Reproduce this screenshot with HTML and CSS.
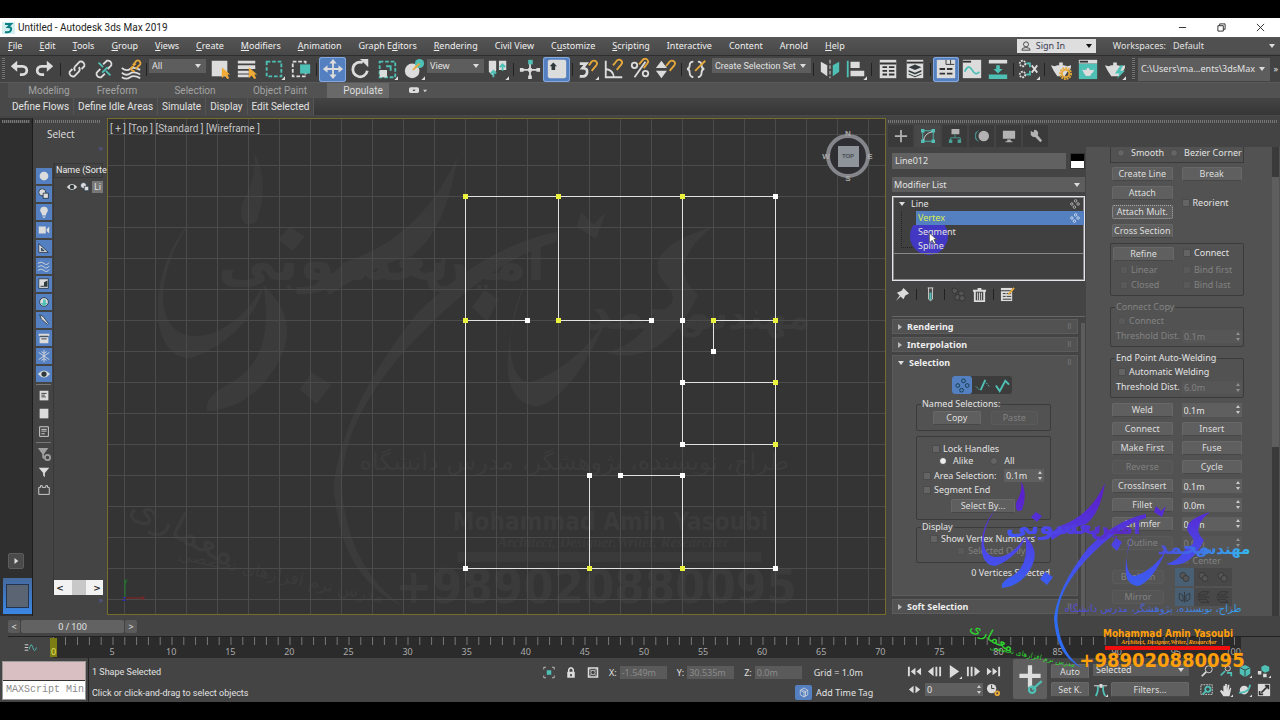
FILE: index.html
```html
<!DOCTYPE html>
<html lang="en">
<head>
<meta charset="utf-8">
<title>Untitled - Autodesk 3ds Max 2019</title>
<link rel="stylesheet" href="styles.css">
</head>
<body>
<svg class="defs" aria-hidden="true">
  <defs>
    <linearGradient id="ink" x1="0" x2="280" y1="0" y2="0" gradientUnits="userSpaceOnUse">
      <stop offset="0" stop-color="#2e63ff"/><stop offset=".25" stop-color="#4a4bee"/><stop offset=".55" stop-color="#5a28c8"/><stop offset=".8" stop-color="#3f6be6"/><stop offset="1" stop-color="#35b8f0"/>
    </linearGradient>
    <linearGradient id="inkline" x1="90" x2="280" y1="0" y2="0" gradientUnits="userSpaceOnUse">
      <stop offset="0" stop-color="#5648c8"/><stop offset=".4" stop-color="#4a5cd8"/><stop offset="1" stop-color="#35a8f0"/>
    </linearGradient>
    <linearGradient id="sweep" x1="0" y1="20" x2="0" y2="130" gradientUnits="userSpaceOnUse">
      <stop offset="0" stop-color="#5a22cc"/><stop offset=".5" stop-color="#4a48e8"/><stop offset="1" stop-color="#2f6cf4"/>
    </linearGradient>
    <symbol id="brand" viewBox="0 0 285 195">
      <g class="b-sweep">
        <path d="M27 32C14 50 10 76 27 79C40 80 52 68 57 58C55 72 38 85 27 88C8 88 10 50 27 32ZM53 3Q60 16 54 32Q47 36 48 25Q55 13 53 3ZM57 58Q72 72 64 88Q54 108 34 110Q32 104 44 98Q62 88 57 58ZM137 5Q132 36 118 46Q102 50 84 62Q80 56 92 48Q122 38 137 5ZM178 40Q150 48 118 82Q85 118 90 148Q94 176 114 190Q88 178 86 140Q90 108 120 70Q148 42 178 36ZM165 56C155 78 158 98 167 98C180 94 190 84 198 73Q184 104 170 108Q148 106 165 56ZM242 34Q210 44 223 58Q230 66 218 70Q212 82 198 86Q222 92 236 62Q222 50 242 34ZM68 34l6 4-5 6-6-5ZM148 60l6 4-5 9-6-6ZM77 94l8 5-6 8-7-6ZM188 28l5 5 5-5-4 11-8-5Z"/>
      </g>
      <g class="b-name" direction="rtl" text-anchor="middle">
        <text x="216" y="76" font-size="20">محمد</text>
        <text x="148" y="56" font-size="22">امین</text>
        <text x="86" y="56" font-size="24">یعسوبی</text>
        <text x="255" y="76" font-size="15">مهندس</text>
      </g>
      <text class="b-line" direction="rtl" text-anchor="middle" x="185" y="134" font-size="10">طراح، نویسنده، پژوهشگر، مدرس دانشگاه</text>
      <g class="b-green" direction="rtl" text-anchor="middle">
        <text x="22" y="163" font-size="15" transform="rotate(28 22 163)">معماری</text>
        <text x="64" y="180" font-size="7" transform="rotate(12 64 180)">مدرس نرم افزارهای تخصصی</text>
      </g>
      <g class="b-orange" text-anchor="middle">
        <text x="200" y="159" font-size="10">Mohammad Amin Yasoubi</text>
        <text class="b-sub" x="201" y="166">Architect, Designer,Writer, Researcher</text>
        <text x="194" y="189" font-size="20">+989020880095</text>
      </g>
      <path class="b-red" d="M137 168H262V172H137Z"/>
    </symbol>
    <symbol id="undo" viewBox="0 0 24 24"><path class="st3" d="M7 9h9a4.500 4.500 0 0 1 0 9h-3"/><path class="w" d="M3 9l7-6v12z"/></symbol>
    <symbol id="redo" viewBox="0 0 24 24"><path class="st3" d="M17 9H8a4.500 4.500 0 0 0 0 9h3"/><path class="w" d="M21 9l-7-6v12z"/></symbol>
    <symbol id="link" viewBox="0 0 24 24"><path class="st2" d="M10 14a4 4 0 0 1 0-5l5-5a4 4 0 0 1 5 5l-3 3M14 10a4 4 0 0 1 0 5l-5 5a4 4 0 0 1-5-5l3-3"/></symbol>
    <symbol id="unlink" viewBox="0 0 24 24"><path class="st2" d="M11 7l4-4a4 4 0 0 1 5 5l-4 4M13 17l-4 4a4 4 0 0 1-5-5l4-4"/><path class="tl" d="M6 5l5 5M14 14l5 5M16 10l-6 6"/></symbol>
    <symbol id="bind" viewBox="0 0 24 24"><path class="st2" d="M2 11q5 4 9 1t11 1M2 16q5 4 9 1t11 1M2 21q5 3 9 0t11 1"/><path class="ol" d="M14 8l4-5a3 3 0 0 1 4 4l-5 5M17 6l-5 5a3 3 0 0 0 4 3"/></symbol>
    <symbol id="pick" viewBox="0 0 24 24"><path class="w" d="M3 3h17v17H3z"/><path class="o" d="M14 10v12l3-3 3 4 2-1-2-4h3z"/></symbol>
    <symbol id="pickname" viewBox="0 0 24 24"><path class="w" d="M2 3h19v3H2zM2 8h19v4H2zM2 14h12v3H2zM2 18h12v3H2z"/><path class="o" d="M14 10v12l3-3 3 4 2-1-2-4h3z"/></symbol>
    <symbol id="rect" viewBox="0 0 24 24"><path class="tl dash" d="M4 4h16v16H4z"/><path class="w" d="M24 20v4h-4z"/></symbol>
    <symbol id="window" viewBox="0 0 24 24"><path class="st2 dash" d="M3 4h14v16H3z"/><path class="t" d="M11 7h11v10H11z"/></symbol>
    <symbol id="move" viewBox="0 0 24 24"><path class="st2" d="M12 4v16M4 12h16"/><path class="w" d="M12 1l4 5H8zM12 23l4-5H8zM1 12l5-4v8zM23 12l-5-4v8z"/></symbol>
    <symbol id="rotate" viewBox="0 0 24 24"><path class="st3" d="M15 5A8 8 0 1 0 20 14"/><path class="w" d="M12 1h9v9z"/></symbol>
    <symbol id="scale" viewBox="0 0 24 24"><path class="tl dash" d="M4 4h17v17H4z"/><path class="w" d="M4 13h8v8H4zM24 20v4h-4z"/><path class="tl" d="M11 9h5v5"/></symbol>
    <symbol id="place" viewBox="0 0 24 24"><circle class="w" cx="10" cy="14" r="8"/><circle class="t" cx="18" cy="6" r="5"/><path class="ol" d="M11 13l7-7"/><path class="w" d="M24 20v4h-4z"/></symbol>
    <symbol id="pivot" viewBox="0 0 24 24"><path class="w" d="M2 3h8v11l-4 5-4-4zM13 3h8v10h-8zM24 20v4h-4z"/><path class="tl" d="M7 21v-7M4 17l3-3 3 3M17 14V7M14 10l3-3 3 3"/></symbol>
    <symbol id="manip" viewBox="0 0 24 24"><path class="st2" d="M3 13h18M12 6v15"/><path class="w" d="M1 11h4v4H1zM19 11h4v4h-4zM10 19h4v4h-4zM10 11h4v4h-4z"/><path class="t" d="M10 2h5v5h-5z"/></symbol>
    <symbol id="kbd" viewBox="0 0 24 24"><rect class="w" x="2" y="2" width="20" height="20" rx="2"/><path class="k" d="M8 5l4 4h-2v4H6V9H4z"/></symbol>
    <symbol id="snap" viewBox="0 0 24 24"><path class="st3" d="M3 6h7l-4 5q6 0 5 5t-8 4"/><path class="ol" d="M13 8l3-4a3 3 0 0 1 5 4l-5 6"/><path class="w" d="M24 20v4h-4z"/></symbol>
    <symbol id="angle" viewBox="0 0 24 24"><path class="st2" d="M3 3v18h18M3 12q8 1 9 9"/><path class="ol" d="M11 8l4-5a3 3 0 0 1 5 4l-5 6"/></symbol>
    <symbol id="percent" viewBox="0 0 24 24"><circle class="st2" cx="6" cy="8" r="3"/><circle class="st2" cx="18" cy="17" r="3"/><path class="st2" d="M18 4L6 21"/><path class="ol" d="M11 7l4-5a3 3 0 0 1 5 4l-4 5"/></symbol>
    <symbol id="spin" viewBox="0 0 24 24"><path class="w" d="M1 11l6-8 6 8zM1 14h12l-6 8z"/><path class="ol" d="M12 9l4-5a3 3 0 0 1 5 4l-5 6"/></symbol>
    <symbol id="braces" viewBox="0 0 24 24"><path class="st2" d="M8 4q-4 0-4 4t-3 4q3 0 3 4t4 5M13 4q4 0 4 4t3 4q-3 0-3 4t-4 5"/><path class="ol" d="M10 14L21 3"/></symbol>
    <symbol id="mirror" viewBox="0 0 24 24"><path class="w" d="M2 4l7 4v12l-7-5z"/><path class="t" d="M22 4l-7 4v12l7-5z"/><path class="st1 dash" d="M12 2v20"/></symbol>
    <symbol id="align" viewBox="0 0 24 24"><path class="tl" d="M3 3v18"/><path class="w" d="M6 4h10v7H6zM6 14h15v6H6zM24 20v4h-4z"/></symbol>
    <symbol id="table" viewBox="0 0 24 24"><path class="w" d="M3 2h18v20H3z"/><path class="kl" d="M3 6h18M6 10h5M13 10h6M6 14h5M13 14h6M6 18h5M13 18h6"/></symbol>
    <symbol id="layers" viewBox="0 0 24 24"><path class="w" d="M3 2h18v20H3z"/><path class="kl" d="M3 5h18"/><path class="k" d="M5 10l7-3 7 3-7 3zM5 13l7 3 7-3v2l-7 3-7-3zM5 17l7 3 7-3v1l-7 3-7-3z"/></symbol>
    <symbol id="ribbon" viewBox="0 0 24 24"><path class="w" d="M2 2h20v20H2z"/><path class="kl1" d="M12 2v5h9M17 2v5"/><path class="kl" d="M5 12h6M13 12h6M5 17h6M13 17h6"/></symbol>
    <symbol id="curve" viewBox="0 0 24 24"><path class="w" d="M2 2h20v20H2z"/><path class="kl" d="M2 4h9"/><path class="tl" d="M4 15q4-9 8-2t8 2"/></symbol>
    <symbol id="dope" viewBox="0 0 24 24"><path class="w" d="M2 2h20v4H2z"/><path class="t" d="M2 18h20v5H2zM10 8h4v4h3l-5 5-5-5h3z"/></symbol>
    <symbol id="mat" viewBox="0 0 24 24"><circle class="st2 dash2" cx="5" cy="6" r="3"/><circle class="st2 dash2" cx="5" cy="18" r="3"/><path class="tl" d="M9 6h4v4M9 18h4v-4"/><path class="st2" d="M15 8l6 8M21 8l-6 8"/><path class="w" d="M24 20v4h-4z"/></symbol>
    <symbol id="pot" viewBox="0 0 24 24"><path class="w" d="M1 8l4 1q6-3 14 0l4-1q0 6-4 7l-3 5H8l-4-6zM10 5h4v3h-4z"/></symbol>
    <symbol id="gear" viewBox="0 0 24 24"><circle class="ol" cx="17" cy="17" r="4"/><circle class="ol dash2" cx="17" cy="17" r="6"/></symbol>
    <symbol id="renderset" viewBox="0 0 24 24"><use href="#pot"/><use href="#gear"/></symbol>
    <symbol id="frame" viewBox="0 0 24 24"><path class="t" d="M2 6h20v17H2z"/><path class="w" d="M2 2h20v4H2z"/><path class="kl" d="M3 4h9"/><svg x="4" y="8" width="16" height="14"><use href="#pot"/></svg></symbol>
    <symbol id="render" viewBox="0 0 24 24"><use href="#pot"/><path class="t" d="M18 8l-6 9h5l-3 6 9-9h-5l3-6z"/><path class="w" d="M24 20v4h-4z"/></symbol>
    <symbol id="sphere" viewBox="0 0 16 16"><circle class="w" cx="8" cy="8" r="5"/></symbol>
    <symbol id="shapes" viewBox="0 0 16 16"><circle class="kw" cx="6" cy="6" r="4"/><path class="kw" d="M7 7h6v6H7z"/></symbol>
    <symbol id="bulb" viewBox="0 0 16 16"><path class="w" d="M8 2a4 4 0 0 0-3 7l1 3h4l1-3a4 4 0 0 0-3-7zM6 13h4l-2 2z"/></symbol>
    <symbol id="cam" viewBox="0 0 16 16"><path class="w" d="M2 4h8v8H2zM11 7l3-3v8l-3-3z"/></symbol>
    <symbol id="tri" viewBox="0 0 16 16"><path class="kw" d="M2 3l11 10H2zM5 8v3h3z"/></symbol>
    <symbol id="waves" viewBox="0 0 16 16"><path class="st1" d="M1 5q4-3 7 0t6-1M1 9q4-3 7 0t6-1M1 13q4-3 7 0t6-1"/></symbol>
    <symbol id="group" viewBox="0 0 16 16"><path class="kw" d="M2 2h11v11H2z"/><path class="k" d="M4 10h4V6l4-2v7H4z"/></symbol>
    <symbol id="xref" viewBox="0 0 16 16"><circle class="kw" cx="8" cy="8" r="5"/><path class="t" d="M7 5h3v4h2l-4 4-4-4h3z"/></symbol>
    <symbol id="bone" viewBox="0 0 16 16"><path class="kw" d="M3 2l4 2 6 8-1 1-7-6z"/></symbol>
    <symbol id="box" viewBox="0 0 16 16"><path class="w" d="M2 3h12v3H2zM3 7h10v7H3z"/><path class="kl1" d="M3 6h10M5 9h6"/></symbol>
    <symbol id="snow" viewBox="0 0 16 16"><path class="st1" d="M8 1v14M2 4l12 8M14 4L2 12M5 3l3 2 3-2M5 13l3-2 3 2"/></symbol>
    <symbol id="eye" viewBox="0 0 16 16"><path class="w" d="M1 8q7-8 14 0-7 8-14 0z"/><circle class="k" cx="8" cy="8" r="3"/></symbol>
    <symbol id="doc" viewBox="0 0 16 16"><path class="w" d="M3 2h10v11H3z"/><path class="kl1" d="M5 5h6M5 7h4M5 9h5"/></symbol>
    <symbol id="blank" viewBox="0 0 16 16"><path class="w" d="M3 2h10v11H3z"/></symbol>
    <symbol id="docl" viewBox="0 0 16 16"><path class="st1" d="M3 2h10v11H3zM5 5h6M5 7h6M5 10h4"/></symbol>
    <symbol id="filter" viewBox="0 0 16 16"><path class="w" d="M2 3h12L9 9v5l-2-2V9z"/></symbol>
    <symbol id="filterset" viewBox="0 0 16 16"><path class="w" d="M1 1h12L8 8v6l-2-2V8z"/><circle class="st2" cx="12" cy="12" r="3"/></symbol>
    <symbol id="bag" viewBox="0 0 16 16"><path class="st1" d="M2 5h2V3h2v2h4V3h2v2h2v8H2z"/></symbol>
    <symbol id="plus" viewBox="0 0 16 16"><path class="st2" d="M8 1v14M1 8h14"/></symbol>
    <symbol id="modify" viewBox="0 0 16 16"><path class="tl1" d="M2 2h12v12H2z"/><path class="t" d="M0 0h4v4H0zM12 0h4v4h-4zM0 12h4v4H0zM12 12h4v4h-4z"/><path class="st1" d="M3 13Q4 5 13 3"/></symbol>
    <symbol id="hier" viewBox="0 0 16 16"><path class="w" d="M4 0h9v6H4z"/><path class="tl1" d="M8 6v4M3 13v-3h11v3"/><path class="t" d="M1 12h4v4H1zM11 12h4v4h-4z"/></symbol>
    <symbol id="motion" viewBox="0 0 16 16"><circle class="w" cx="10" cy="8" r="6"/><path class="tl1" d="M4 2a7 7 0 0 0 0 12M2 3a7 7 0 0 0 0 10"/></symbol>
    <symbol id="display" viewBox="0 0 16 16"><path class="w" d="M1 2h14v9H1zM6 12h4v2h2v1H4v-1h2z"/></symbol>
    <symbol id="wrench" viewBox="0 0 16 16"><path class="w" d="M2 2l3 2 1-3a4 4 0 0 1 4 6l5 6-2 2-6-6a4 4 0 0 1-5-5z"/></symbol>
    <symbol id="dots" viewBox="0 0 16 16"><g class="ring"><circle cx="9" cy="3" r="2"/><circle cx="3" cy="8" r="2"/><circle cx="13" cy="8" r="2"/><circle cx="7" cy="13" r="2"/></g></symbol>
    <symbol id="seg" viewBox="0 0 16 16"><path class="tl" d="M6 13l5-11"/><path class="tl1 dash2" d="M1 9l4 4M12 5l3 4"/></symbol>
    <symbol id="spline" viewBox="0 0 16 16"><path class="tl" d="M1 8l4 6 6-11 4 4"/></symbol>
    <symbol id="pin" viewBox="0 0 16 16"><path class="w" d="M9 1l6 6-2 1-2 1-2 4-3-3-5 5 4-6-3-3 5-2z"/></symbol>
    <symbol id="tube" viewBox="0 0 16 16"><path class="st1" d="M5 1h6M6 1v12q2 3 4 0V1"/><path class="t" d="M7 6h2v8H7z"/></symbol>
    <symbol id="unique" viewBox="0 0 16 16"><circle class="d" cx="4" cy="4" r="3"/><circle class="d" cx="11" cy="7" r="3"/><circle class="d" cx="7" cy="11" r="3"/><circle class="d" cx="12" cy="12" r="3"/></symbol>
    <symbol id="trash" viewBox="0 0 16 16"><path class="st2" d="M1 4h14M3 5v10h10V5M6 2h4"/><path class="st1" d="M6 6v8M8 6v8M10 6v8"/></symbol>
    <symbol id="config" viewBox="0 0 16 16"><path class="w" d="M1 1h12v14H1z"/><path class="kl1" d="M1 4h12M3 7h3M7 7h5M3 10h3M7 10h5M3 13h9"/><path class="ol" d="M9 8l6-7"/></symbol>
    <symbol id="first" viewBox="0 0 16 16"><path class="w" d="M1 3h2v10H1zM9 4v8L4 8zM15 4v8l-5-4z"/></symbol>
    <symbol id="prev" viewBox="0 0 16 16"><path class="w" d="M7 3v10L1 8zM9 3h2v10H9zM13 3h2v10h-2z"/></symbol>
    <symbol id="play" viewBox="0 0 16 16"><path class="w" d="M3 1l10 7-10 7zM16 13v3h-3z"/></symbol>
    <symbol id="next" viewBox="0 0 16 16"><path class="w" d="M9 3v10l6-5zM1 3h2v10H1zM5 3h2v10H5z"/></symbol>
    <symbol id="last" viewBox="0 0 16 16"><path class="w" d="M15 3h-2v10h2zM7 4v8l5-4zM1 4v8l5-4z"/></symbol>
    <symbol id="key" viewBox="0 0 16 16"><path class="w" d="M7 4v8L2 8zM9 4v8l5-4z"/></symbol>
    <symbol id="clock" viewBox="0 0 16 16"><circle class="w" cx="6" cy="7" r="5"/><path class="kl1" d="M6 3v4h3"/><circle class="ol" cx="12" cy="12" r="2"/></symbol>
    <symbol id="tangent" viewBox="0 0 16 16"><path class="tl" d="M3 15Q6 10 5 4M13 15Q10 10 11 4"/><path class="st1" d="M1 4h14"/><path class="w" d="M7 2h3v4H7zM16 13v3h-3z"/></symbol>
    <symbol id="mag" viewBox="0 0 16 16"><circle class="st1" cx="10" cy="6" r="4"/><path class="st2" d="M7 9l-5 5"/></symbol>
    <symbol id="magall" viewBox="0 0 16 16"><circle class="st1" cx="10" cy="5" r="3"/><path class="tl" d="M7 8l-5 5M9 10h5v4"/></symbol>
    <symbol id="cube" viewBox="0 0 16 16"><path class="t" d="M2 4l6-3 6 3v7l-6 4-6-4z"/><path class="kl1" d="M2 4l6 3 6-3M8 7v8"/><path class="w" d="M16 13v3h-3z"/></symbol>
    <symbol id="cubes" viewBox="0 0 16 16"><path class="t" d="M9 1l5 2v5l-5 2-4-3V3z"/><path class="w" d="M1 8h4v4H1zM7 11h4v4H7zM16 13v3h-3z"/></symbol>
    <symbol id="region" viewBox="0 0 16 16"><path class="st1 dash2" d="M1 2h13v11H1z"/><circle class="tl" cx="9" cy="7" r="3"/><path class="tl" d="M7 9l-4 4"/></symbol>
    <symbol id="hand" viewBox="0 0 16 16"><path class="w" d="M5 15L1 9l2-1 2 2V3h2v5V1h2v7l1-6h2l-1 7 2-4 1 1-2 9zM16 13v3h-3z"/></symbol>
    <symbol id="orbit" viewBox="0 0 16 16"><circle class="w" cx="7" cy="8" r="5"/><path class="tl" d="M1 11Q12 12 14 2"/><path class="w" d="M16 13v3h-3z"/></symbol>
    <symbol id="maxi" viewBox="0 0 16 16"><path class="w" d="M1 1h14v14H1z"/><path class="kl" d="M9 3h4v4M12 4l-7 7M7 13H3V9"/></symbol>
    <symbol id="lock" viewBox="0 0 16 16"><path class="w" d="M3 7h10v8H3z"/><path class="st2" d="M5 8V4q3-5 6 0v4"/><path class="kl" d="M8 10v3"/></symbol>
    <symbol id="iso" viewBox="0 0 16 16"><path class="st1" d="M1 4V1h3M12 1h3v3M15 12v3h-3M4 15H1v-3"/><path class="t" d="M5 5h6v6H5z"/></symbol>
    <symbol id="absr" viewBox="0 0 16 16"><path class="st2" d="M2 2h12v12H2z"/><path class="st1" d="M2 2l4 4M14 2l-4 4M2 14l4-4M14 14l-4-4"/><circle class="st1" cx="8" cy="8" r="3"/></symbol>
    <symbol id="tag" viewBox="0 0 16 16"><path class="st1" d="M3 5l5-3 5 3v6l-5 3-5-3zM3 5l5 3 5-3M8 8v6M5 4l5 3v6"/></symbol>
    <symbol id="bool" viewBox="0 0 16 16"><circle class="d" cx="6" cy="6" r="4"/><circle class="d" cx="10" cy="10" r="4"/></symbol>
    <symbol id="mirh" viewBox="0 0 16 16"><path class="dk" d="M1 3l5 3v8l-5-3zM15 3l-5 3v8l5-3zM8 1v14"/></symbol>
    <symbol id="mirv" viewBox="0 0 16 16"><path class="dk" d="M5 1h10l-3 4H1zM5 15h10l-3-4H1zM0 8h16"/></symbol>
  </defs>
</svg>

<div class="app">
  <header class="title">
    <svg class="i14" viewBox="0 0 14 14"><path fill="#d5eeee" d="M0 1h13v12H0z"/><path fill="none" stroke="#0b7f86" stroke-width="2" d="M3 3h6L6 6q4 0 3 3T3 11"/></svg>
    <span class="grow">Untitled - Autodesk 3ds Max 2019</span>
    <button class="win" aria-label="Minimize"><svg viewBox="0 0 10 10"><path d="M1 5h8"/></svg></button>
    <button class="win" aria-label="Restore"><svg viewBox="0 0 10 10"><path d="M1 3h6v6H1zM3 3V1h6v6H7"/></svg></button>
    <button class="win" aria-label="Close"><svg viewBox="0 0 10 10"><path d="M1 1l8 8M9 1L1 9"/></svg></button>
  </header>

  <nav class="menu">
    <a href="#"><u>F</u>ile</a><a href="#"><u>E</u>dit</a><a href="#"><u>T</u>ools</a><a href="#"><u>G</u>roup</a><a href="#"><u>V</u>iews</a><a href="#"><u>C</u>reate</a><a href="#"><u>M</u>odifiers</a><a href="#"><u>A</u>nimation</a><a href="#">Graph E<u>d</u>itors</a><a href="#"><u>R</u>endering</a><a href="#">Civil View</a><a href="#">C<u>u</u>stomize</a><a href="#"><u>S</u>cripting</a><a href="#">Interactive</a><a href="#">Content</a><a href="#">Arnold</a><a href="#"><u>H</u>elp</a>
    <span class="grow"></span>
    <button class="signin"><svg viewBox="0 0 12 12"><circle cx="6" cy="4" r="3"/><path d="M1 11q0-3 4-3h2q4 0 4 3z"/></svg><span>Sign In</span><i class="tri"></i></button>
    <label class="wslabel" for="ws">Workspaces:</label>
    <span class="sel ws"><select id="ws"><option>Default</option></select></span>
  </nav>

  <div class="tools">
    <i class="grip"></i>
    <button aria-label="Undo"><svg><use href="#undo"/></svg></button><button aria-label="Redo"><svg><use href="#redo"/></svg></button><i class="sep"></i>
    <button class="l" aria-label="Link"><svg><use href="#link"/></svg></button><button class="l" aria-label="Unlink"><svg><use href="#unlink"/></svg></button><button class="l" aria-label="Bind"><svg><use href="#bind"/></svg></button><i class="sep"></i>
    <span class="sel s57"><select aria-label="Selection filter"><option>All</option></select></span>
    <button class="l" aria-label="Select"><svg><use href="#pick"/></svg></button><button class="l" aria-label="Select by name"><svg><use href="#pickname"/></svg></button><button class="l" aria-label="Region"><svg><use href="#rect"/></svg></button><button class="l" aria-label="Window crossing"><svg><use href="#window"/></svg></button><i class="sep"></i>
    <button class="l on" aria-label="Move"><svg><use href="#move"/></svg></button><button class="l" aria-label="Rotate"><svg><use href="#rotate"/></svg></button><button class="l" aria-label="Scale"><svg><use href="#scale"/></svg></button><button class="l" aria-label="Place"><svg><use href="#place"/></svg></button>
    <span class="sel s57"><select aria-label="Coordinate system"><option>View</option></select></span>
    <button class="l" aria-label="Pivot"><svg><use href="#pivot"/></svg></button><i class="sep"></i>
    <button class="l" aria-label="Manipulate"><svg><use href="#manip"/></svg></button><button class="l on" aria-label="Keyboard override"><svg><use href="#kbd"/></svg></button><i class="sep"></i>
    <button aria-label="Snap"><svg><use href="#snap"/></svg></button><button aria-label="Angle snap"><svg><use href="#angle"/></svg></button><button aria-label="Percent snap"><svg><use href="#percent"/></svg></button><button aria-label="Spinner snap"><svg><use href="#spin"/></svg></button><i class="sep"></i>
    <button aria-label="Edit selection sets"><svg><use href="#braces"/></svg></button>
    <span class="sel s99"><select aria-label="Selection sets"><option>Create Selection Set</option></select></span><i class="sep"></i>
    <button class="l" aria-label="Mirror"><svg><use href="#mirror"/></svg></button><button aria-label="Align"><svg><use href="#align"/></svg></button><i class="sep"></i>
    <button class="l" aria-label="Scene explorer"><svg><use href="#table"/></svg></button><button class="l" aria-label="Layer explorer"><svg><use href="#layers"/></svg></button><i class="sep"></i>
    <button class="on" aria-label="Toggle ribbon"><svg><use href="#ribbon"/></svg></button><button aria-label="Curve editor"><svg><use href="#curve"/></svg></button><button aria-label="Schematic"><svg><use href="#dope"/></svg></button><i class="sep"></i>
    <button aria-label="Material editor"><svg><use href="#mat"/></svg></button><i class="sep"></i>
    <button class="l" aria-label="Render setup"><svg><use href="#renderset"/></svg></button><button class="l" aria-label="Rendered frame"><svg><use href="#frame"/></svg></button><button class="l" aria-label="Render"><svg><use href="#render"/></svg></button>
    <i class="grip g2"></i>
    <span class="sel path grow"><select aria-label="Project path"><option>C:\Users\ma...ents\3dsMax</option></select></span><span class="more">»</span>
  </div>

  <div class="ribbon">
    <div class="tabs"><button>Modeling</button><button>Freeform</button><button>Selection</button><button>Object Paint</button><button class="cur">Populate</button><button class="mini" aria-label="Ribbon options"><svg viewBox="0 0 24 8"><rect width="12" height="7" rx="2" fill="#ddd"/><path fill="#333" d="M4 3h4L6 5z"/><path fill="#ccc" d="M17 3h5l-3 3z"/></svg></button></div>
    <div class="cmds"><button>Define Flows</button><button>Define Idle Areas</button><button>Simulate</button><button>Display</button><button>Edit Selected</button></div>
  </div>

  <main class="work">
    <aside class="strip">
      <i class="hgrip"></i>
      <button class="exp" aria-label="Expand"><svg viewBox="0 0 8 8"><path class="w" d="M2 0l5 4-5 4z"/></svg></button>
      <button class="layout" aria-label="Viewport layout"><span></span></button>
    </aside>
    <aside class="scene">
      <i class="hgrip"></i>
      <div class="stitle">Select</div><div class="chev">»</div>
      <div class="sbody">
        <div class="sicons">
          <button aria-label="Geometry"><svg><use href="#sphere"/></svg></button><button aria-label="Shapes"><svg><use href="#shapes"/></svg></button><button aria-label="Lights"><svg><use href="#bulb"/></svg></button><button aria-label="Cameras"><svg><use href="#cam"/></svg></button><button aria-label="Helpers"><svg><use href="#tri"/></svg></button><button aria-label="Space warps"><svg><use href="#waves"/></svg></button><button aria-label="Groups"><svg><use href="#group"/></svg></button><button aria-label="References"><svg><use href="#xref"/></svg></button><button aria-label="Bones"><svg><use href="#bone"/></svg></button><button aria-label="Containers"><svg><use href="#box"/></svg></button><button aria-label="Frozen"><svg><use href="#snow"/></svg></button><button aria-label="Hidden"><svg><use href="#eye"/></svg></button>
          <hr><button class="pl" aria-label="All"><svg><use href="#doc"/></svg></button><button class="pl" aria-label="None"><svg><use href="#blank"/></svg></button><button class="pl" aria-label="Invert"><svg><use href="#docl"/></svg></button>
          <hr><button class="pl dim" aria-label="Configure filter"><svg><use href="#filterset"/></svg></button><button class="pl" aria-label="Filter"><svg><use href="#filter"/></svg></button><button class="pl" aria-label="Container"><svg><use href="#bag"/></svg></button>
        </div>
        <div class="slist">
          <div class="shead">Name (Sorte</div>
          <div class="sitem"><svg><use href="#eye"/></svg><svg><use href="#shapes"/></svg><span>Li</span></div>
          <div class="grow"></div>
          <div class="hbar"><button aria-label="Scroll left">&lt;</button><i></i><button aria-label="Scroll right">&gt;</button></div>
        </div>
      </div>
      <div class="chev">»</div>
    </aside>

    <section class="view">
      <svg class="canvas" width="100%" height="100%">
        <defs><pattern id="grid" x="16" y="15" width="31" height="31" patternUnits="userSpaceOnUse"><path d="M0 0h31v1H0zM0 0h1v31H0z" fill="#4b4b4b"/></pattern></defs>
        <use class="ghost" href="#brand" x="17" y="25" width="692" height="474"/>
        <rect width="100%" height="100%" fill="url(#grid)"/>
        <g transform="translate(357 77)" shape-rendering="crispEdges">
          <path class="plan" d="M0 0H310V372H0ZM93 0V124H186M217 0V248H310M0 124H62M310 124H248V155M217 186H310M155 279H217V372M124 279V372"/>
          <path class="vy" d="M0 0h0M93 0h0M217 0h0M0 124h0M93 124h0M248 124h0M310 124h0M310 186h0M310 248h0M124 372h0M217 372h0"/>
          <path class="vw" d="M310 0h0M62 124h0M186 124h0M217 124h0M248 155h0M217 186h0M217 248h0M124 279h0M155 279h0M217 279h0M0 372h0M310 372h0"/>
        </g>
      </svg>
      <div class="vlabel">[ + ] [Top ] [Standard ] [Wireframe ]</div>
      <svg class="compass" viewBox="0 0 54 54"><circle cx="27" cy="28" r="20"/><path d="M17 18h21v21H17z"/><g text-anchor="middle"><text x="27" y="8">N</text><text x="27" y="53">S</text><text x="5" y="31">W</text><text x="49" y="31">E</text><text class="top" x="27" y="30">TOP</text></g></svg>
      <svg class="axis" viewBox="0 0 26 26"><path stroke="#1c7a2c" d="M3 22V4"/><path stroke="#8a2020" d="M3 22h18"/><text x="2" y="7" fill="#1c7a2c">y</text><text x="1" y="25" fill="#2222cc">z</text><text x="19" y="24" fill="#8a2020">x</text></svg>
    </section>

    <aside class="cmd">
      <i class="hgrip"></i>
      <div class="ctabs"><button aria-label="Create"><svg><use href="#plus"/></svg></button><button class="cur" aria-label="Modify"><svg><use href="#modify"/></svg></button><button aria-label="Hierarchy"><svg><use href="#hier"/></svg></button><button aria-label="Motion"><svg><use href="#motion"/></svg></button><button aria-label="Display"><svg><use href="#display"/></svg></button><button aria-label="Utilities"><svg><use href="#wrench"/></svg></button></div>
      <div class="cols">
        <div class="left">
          <div class="nrow"><input aria-label="Object name" value="Line012"><button class="swatch" aria-label="Object colour"></button></div>
          <span class="sel mod"><select aria-label="Modifier list"><option>Modifier List</option></select></span>
          <div class="stack">
            <div class="si"><i class="tri dn"></i><span class="grow">Line</span><svg><use href="#dots"/></svg></div>
            <div class="si sub hl"><span class="grow">Vertex</span><svg><use href="#dots"/></svg></div>
            <div class="si sub">Segment</div>
            <div class="si sub">Spline</div>
            <i class="halo"></i>
            <svg class="cursor" viewBox="0 0 8 13"><path d="M0 0v11l3-3 2 4 2-1-2-4h3z"/></svg>
          </div>
          <div class="stools"><button aria-label="Pin"><svg><use href="#pin"/></svg></button><i></i><button aria-label="Show end result"><svg><use href="#tube"/></svg></button><i></i><button aria-label="Make unique"><svg><use href="#unique"/></svg></button><button aria-label="Remove"><svg><use href="#trash"/></svg></button><i></i><button aria-label="Configure"><svg><use href="#config"/></svg></button></div>
          <div class="rolls">
            <div class="rlist">
              <div class="roll"><i class="tri rt"></i><b>Rendering</b><em>⠿</em></div>
              <div class="roll"><i class="tri rt"></i><b>Interpolation</b><em>⠿</em></div>
              <div class="roll open">
                <div class="rh"><i class="tri dn"></i><b>Selection</b><em>⠿</em></div>
                <div class="sub3"><button class="on" aria-label="Vertex"><svg><use href="#dots"/></svg></button><button aria-label="Segment"><svg><use href="#seg"/></svg></button><button aria-label="Spline"><svg><use href="#spline"/></svg></button></div>
                <fieldset class="fs named"><legend>Named Selections:</legend><button class="btn">Copy</button><button class="btn" disabled>Paste</button></fieldset>
                <fieldset class="fs lockfs">
                  <label class="in1"><input type="checkbox">Lock Handles</label>
                  <div class="radios"><label><input type="radio" name="h" checked>Alike</label><label><input type="radio" name="h">All</label></div>
                  <div class="arow"><label class="grow"><input type="checkbox">Area Selection:</label><span class="num n40"><input aria-label="Area" value="0.1m"></span></div>
                  <label><input type="checkbox">Segment End</label>
                  <button class="btn by">Select By...</button>
                </fieldset>
                <fieldset class="fs disp"><legend>Display</legend><label class="in1"><input type="checkbox">Show Vertex Numbers</label><label class="in2 off"><input type="checkbox" disabled>Selected Only</label></fieldset>
                <div class="count">0 Vertices Selected</div>
              </div>
              <div class="roll"><i class="tri rt"></i><b>Soft Selection</b><em>⠿</em></div>
            </div>
            <i class="thumb"></i>
          </div>
        </div>
        <div class="right">
          <div class="geo">
            <div class="vt"><label><input type="radio" name="v" disabled>Smooth</label><label><input type="radio" name="v" disabled>Bezier Corner</label></div>
            <div class="two t1"><button class="btn">Create Line</button><button class="btn">Break</button><button class="btn">Attach</button><label class="reo"><input type="checkbox">Reorient</label><button class="btn dot">Attach Mult.</button><button class="btn c1">Cross Section</button></div>
            <fieldset class="fs ref"><button class="btn">Refine</button><label><input type="checkbox">Connect</label><label class="off in"><input type="checkbox" disabled>Linear</label><label class="off"><input type="checkbox" disabled>Bind first</label><label class="off in"><input type="checkbox" disabled>Closed</label><label class="off"><input type="checkbox" disabled>Bind last</label></fieldset>
            <fieldset class="fs thr off"><legend>Connect Copy</legend><label class="in"><input type="checkbox" disabled>Connect</label><div class="arow"><label for="td1" class="grow">Threshold Dist.</label><span class="num"><input id="td1" value="0.1m" disabled></span></div></fieldset>
            <fieldset class="fs thr"><legend>End Point Auto-Welding</legend><label class="in"><input type="checkbox">Automatic Welding</label><div class="arow"><label for="td2" class="grow">Threshold Dist.</label><span class="num off"><input id="td2" value="6.0m" disabled></span></div></fieldset>
            <div class="two t2">
              <button class="btn">Weld</button><span class="num"><input aria-label="Weld" value="0.1m"></span>
              <button class="btn">Connect</button><button class="btn">Insert</button>
              <button class="btn">Make First</button><button class="btn">Fuse</button>
              <button class="btn" disabled>Reverse</button><button class="btn">Cycle</button>
              <button class="btn">CrossInsert</button><span class="num"><input aria-label="CrossInsert" value="0.1m"></span>
              <button class="btn">Fillet</button><span class="num"><input aria-label="Fillet" value="0.0m"></span>
              <button class="btn">Chamfer</button><span class="num"><input aria-label="Chamfer" value="0.0m"></span>
              <button class="btn" disabled>Outline</button><span class="num off"><input aria-label="Outline" value="0.0m" disabled></span>
              <label class="off c2"><input type="checkbox" disabled>Center</label>
            </div>
            <div class="ops"><button class="btn" disabled>Boolean</button><span><svg class="sel1"><use href="#bool"/></svg><svg><use href="#bool"/></svg><svg><use href="#bool"/></svg></span></div>
            <div class="ops"><button class="btn" disabled>Mirror</button><span><svg class="sel1"><use href="#mirh"/></svg><svg><use href="#mirv"/></svg><svg><use href="#mirv"/></svg></span></div>
          </div>
          <i class="rbar"></i>
        </div>
      </div>
    </aside>
  </main>

  <div class="track"><button>&lt;</button><button class="tslide">0 / 100</button><button>&gt;</button></div>
  <div class="time">
    <button class="mcurve" aria-label="Mini curve editor"><svg viewBox="0 0 14 10"><path class="st1" d="M0 2h4M0 5h4M0 8h4"/><path class="tl1" d="M5 7q2-9 4-2t4 0"/></svg></button>
    <div class="ruler"><span class="h0"></span><span>5</span><span>10</span><span>15</span><span>20</span><span>25</span><span>30</span><span>35</span><span>40</span><span>45</span><span>50</span><span>55</span><span>60</span><span>65</span><span>70</span><span>75</span><span>80</span><span>85</span><span>90</span><span>95</span><span class="h1">100</span><b class="now">0</b></div>
  </div>

  <footer class="status">
    <div class="maxs"><div></div><input aria-label="MAXScript Mini Listener" value="MAXScript Mini Listener"></div>
    <div class="msgs"><div>1 Shape Selected</div><div>Click or click-and-drag to select objects</div></div>
    <div class="coords">
      <svg><use href="#iso"/></svg><svg><use href="#lock"/></svg><svg><use href="#absr"/></svg>
      <label>X: <input value="-1.549m"></label><label>Y: <input value="30.535m"></label><label>Z: <input value="0.0m"></label><span class="gr">Grid = 1.0m</span>
      <div class="tagrow"><span class="tagi"><svg><use href="#tag"/></svg></span>Add Time Tag</div>
    </div>
    <div class="play">
      <div><button aria-label="First frame"><svg><use href="#first"/></svg></button><button aria-label="Previous frame"><svg><use href="#prev"/></svg></button><button aria-label="Play"><svg><use href="#play"/></svg></button><button aria-label="Next frame"><svg><use href="#next"/></svg></button><button aria-label="Last frame"><svg><use href="#last"/></svg></button></div>
      <div><button aria-label="Key mode"><svg><use href="#key"/></svg></button><span class="num"><input aria-label="Frame" value="0"></span><button aria-label="Time configuration"><svg><use href="#clock"/></svg></button></div>
    </div>
    <button class="setkey" aria-label="Set key"><svg viewBox="0 0 32 32"><path fill="#ddd" d="M14 3h4v8h8v4h-8v9h-4v-9H6v-4h8z"/><path class="tl" d="M18 26l9-8"/><circle class="tl" cx="18" cy="26" r="3"/></svg></button>
    <div class="keys"><button class="btn">Auto</button><span class="sel"><select aria-label="Key filter set"><option>Selected</option></select></span><button class="btn">Set K.</button><span class="kf"><svg><use href="#tangent"/></svg><button class="btn">Filters...</button></span></div>
    <div class="nav"><svg><use href="#mag"/></svg><svg><use href="#magall"/></svg><svg><use href="#cube"/></svg><svg><use href="#cubes"/></svg><svg><use href="#region"/></svg><svg><use href="#hand"/></svg><svg><use href="#orbit"/></svg><svg><use href="#maxi"/></svg></div>
  </footer>
  <svg class="logo" viewBox="0 0 285 195"><use href="#brand"/></svg>
</div>
</body>
</html>
```

FILE: styles.css
```css
* { box-sizing: border-box; }
body { margin: 0; background: #000; color: #e2e2e2; font: 9px/12px "Noto Sans", "Open Sans", sans-serif; }
button, input, select { font: inherit; color: inherit; margin: 0; padding: 0; border: 0; background: none; }
button { display: block; white-space: nowrap; }
svg { display: block; overflow: visible; }
.defs { position: absolute; width: 0; height: 0; }
.grow { flex: 1; min-width: 0; }

.w { fill: #dcdcdc; }
.t { fill: #4fc0b5; }
.o { fill: #f0ab36; }
.k { fill: #303a3c; }
.d { fill: #555; stroke: #333; }
.dk { fill: none; stroke: #2f2f2f; }
.kw { fill: #dcdcdc; stroke: #27384a; fill-rule: evenodd; }
.st1, .st2, .st3 { fill: none; stroke: #dcdcdc; stroke-width: 1; }
.st2 { stroke-width: 2; }
.st3 { stroke-width: 3; }
.tl, .tl1 { fill: none; stroke: #4fc0b5; stroke-width: 2; }
.tl1 { stroke-width: 1; }
.ol { fill: none; stroke: #e6a83a; stroke-width: 2; }
.kl, .kl1 { fill: none; stroke: #333; stroke-width: 2; }
.kl1 { stroke-width: 1; }
.dash { stroke-dasharray: 4 2; }
.dash2 { stroke-dasharray: 2 1; }
.ring { fill: none; stroke: currentColor; stroke-width: 1; }

.app { position: relative; min-height: 100vh; padding: 18px 0; display: grid; grid-template-rows: 19px 18px 27px 34px 1fr 20px 22px 44px; background: linear-gradient(#000 18px, #444 18px, #444 calc(100% - 18px), #000 calc(100% - 18px)); }

.title { display: flex; align-items: center; background: #fff; color: #222; font: 10px/14px Roboto, sans-serif; padding-left: 2px; }
.i14 { width: 14px; height: 14px; margin-right: 2px; }
.win { width: 39px; height: 18px; }
.win svg { width: 9px; height: 9px; margin: auto; fill: none; stroke: #222; stroke-width: 1; }

.menu { display: flex; align-items: center; background: linear-gradient(#555, #484848); padding-left: 8px; }
.menu a { color: #efefef; text-decoration: none; margin-right: 17px; white-space: nowrap; }
.signin { display: flex; align-items: center; gap: 5px; width: 79px; height: 14px; padding: 0 4px; background: #dedede; color: #3a3a55; }
.signin svg { width: 10px; height: 10px; fill: none; stroke: #333; }
.signin span { flex: 1; text-align: left; }
.signin .tri { border-top-color: #111; }
.wslabel { margin: 0 4px 0 17px; }
.tri { border: 3px solid transparent; border-top: 4px solid #ddd; border-bottom: 0; width: 0; height: 0; }
.tri.rt { border: 3px solid transparent; border-left: 4px solid #bbb; border-right: 0; }
.sel { position: relative; display: block; background: #5d5d5d; }
.sel::after { content: ""; position: absolute; right: 5px; top: 50%; margin-top: -2px; border: 3px solid transparent; border-top: 4px solid #ddd; border-bottom: 0; }
.sel select { display: block; width: 100%; height: 100%; appearance: none; padding: 0 3px; }
.ws { width: 110px; height: 16px; background: #505050; }

.tools { display: flex; align-items: center; background: #434343; border-top: 1px solid #2e2e2e; padding: 0 2px; }
.tools button { flex: none; width: 26px; height: 25px; border-radius: 3px; }
.tools button.l { width: 27px; }
.tools button svg { width: 22px; height: 22px; margin: auto; }
.on { background: #5480c2; }
.tools .on { background: #5480c2; box-shadow: inset 0 0 0 1px #86a9dd; }
.sep { flex: none; width: 1px; height: 13px; margin: 0 2px; background: #222; }
.grip { flex: none; width: 3px; height: 22px; margin-right: 1px; background: repeating-linear-gradient(#777 0 1px, #3a3a3a 1px 2px); }
.g2 { margin: 0 3px 0 4px; }
.s57 { flex: none; width: 57px; height: 14px; margin-bottom: 7px; }
.s99 { flex: none; width: 99px; height: 15px; margin: 0 0 7px 2px; font-family: Roboto, sans-serif; }
.path { height: 23px; }
.more { margin-left: 3px; }

.ribbon { background: #484848; border-top: 1px solid #5a5a5a; padding-left: 8px; font: 10px/15px Roboto, sans-serif; }
.tabs { display: flex; height: 15px; background: #525252; color: #a3a3a3; }
.tabs button { width: 82px; padding: 0; }
.tabs button:nth-child(2) { width: 54px; }
.tabs button:nth-child(3) { width: 102px; }
.tabs button:nth-child(4) { width: 68px; }
.tabs button.cur { width: 62px; margin-left: 13px; padding-left: 10px; background: #696969; color: #ddd; }
.tabs button.mini { width: 24px; margin-left: 20px; }
.mini svg { width: 20px; height: 7px; }
.cmds { display: flex; height: 17px; background: linear-gradient(#444, #363636); }
.cmds button { padding: 0 4px; border-right: 1px solid #555; background: #484848; }

.work { display: grid; grid-template-columns: 33px 74px 1fr 394px; padding-top: 2px; min-height: 500px; }
.hgrip { display: block; flex: none; height: 3px; margin: 2px 2px 1px; background: repeating-linear-gradient(90deg, #777 0 1px, #444 1px 2px); }
.strip { display: flex; flex-direction: column; background: #2f2f2f; border-right: 1px solid #1c1c1c; }
.exp { margin: auto 0 0 8px; width: 16px; height: 16px; background: #4a4a4a; border: 1px solid #5c5c5c; border-radius: 2px; }
.exp svg { width: 6px; height: 8px; margin: auto; }
.layout { margin: 9px 0 2px 3px; height: 36px; padding: 3px; background: linear-gradient(#466a9c, #3a86e6); }
.layout span { display: block; height: 24px; border: 1px solid #23354f; background: #5a6473; }
.scene { display: flex; flex-direction: column; min-width: 0; padding-right: 4px; }
.stitle { padding: 4px 0 0 14px; font: 10px/13px "Open Sans", sans-serif; }
.chev { text-align: right; color: #5b5b9c; line-height: 10px; height: 14px; padding: 2px 0; }
.scene > .chev:last-child { height: 21px; padding: 0; }
.sbody { flex: 1; display: flex; padding-top: 8px; min-height: 0; }
.sicons { width: 21px; padding-left: 3px; border-right: 1px solid #383838; padding-top: 5px; }
.sicons button { width: 16px; height: 16px; margin-bottom: 2px; background: #5480c2; }
.sicons svg { width: 14px; height: 14px; margin: auto; }
.sicons button.pl { background: none; }
.sicons .dim { opacity: .6; }
.sicons hr { border: 0; border-top: 1px solid #777; margin: 2px 0 3px; width: 15px; }
.slist { flex: 1; min-width: 0; display: flex; flex-direction: column; }
.shead { height: 15px; padding-left: 1px; white-space: nowrap; border: 1px solid #383838; color: #eee; font-family: Roboto, sans-serif; }
.sitem { display: flex; align-items: center; padding-left: 12px; height: 17px; gap: 1px; }
.sitem svg { flex: none; width: 12px; height: 12px; }
.sitem span { flex: 1; background: #777; padding: 0 2px; }
.hbar { display: flex; justify-content: space-between; height: 15px; background: #f2f2f2; color: #222; font: bold 9px/14px "DejaVu Sans", sans-serif; }
.hbar button { width: 12px; }
.hbar i { width: 14px; background: #c8c8c8; }

.view { position: relative; background: #343434; border: 1px solid #766c2c; overflow: hidden; margin-bottom: 1px; }
.canvas { position: absolute; inset: 0; }
.plan { fill: none; stroke: #e2e2e2; stroke-width: 1; }
.vy, .vw { fill: none; stroke: #eaf23c; stroke-linecap: square; stroke-width: 5; }
.vw { stroke: #fff; }
.vlabel { position: absolute; left: 2px; top: 3px; color: #c5c5c5; font: 10px/14px Roboto, sans-serif; }
.compass { position: absolute; right: 10px; top: 9px; width: 54px; height: 54px; font: bold 8px/1 "Liberation Sans", sans-serif; fill: #aaa; }
.compass circle { fill: #2f2f33; stroke: #85858c; stroke-width: 4; }
.compass path { fill: #8e9499; }
.compass .top { font-size: 6px; fill: #4a5056; }
.axis { position: absolute; left: 14px; bottom: 12px; width: 26px; height: 26px; fill: none; font: 7px/1 "Liberation Sans", sans-serif; }

.b-sweep { fill: url(#sweep); }
.b-name { fill: url(#ink); font-family: "DejaVu Sans", sans-serif; font-weight: bold; }
.b-line { fill: url(#inkline); font-family: "DejaVu Sans", sans-serif; }
.b-green { fill: #2fd52f; font-family: "DejaVu Sans", sans-serif; }
.b-orange { fill: #ff9f0a; font-family: "DejaVu Sans Condensed", "DejaVu Sans", sans-serif; font-weight: bold; }
.b-sub { font: italic bold 6px "Liberation Serif", serif; }
.b-red { fill: #f00d0d; }
.logo { position: absolute; right: 27px; bottom: 47px; width: 285px; height: 195px; pointer-events: none; }
.ghost { opacity: .03; filter: grayscale(1) brightness(4); }

.cmd { display: flex; flex-direction: column; min-width: 0; }
.ctabs { display: flex; margin-top: 1px; padding-left: 2px; }
.ctabs button { width: 25px; height: 22px; margin-right: 2px; background: #3a3a3a; }
.ctabs button svg { opacity: .75; }
.ctabs button.cur { background: #484848; }
.ctabs button.cur svg { opacity: 1; }
.ctabs svg { width: 14px; height: 14px; margin: auto; }
.cols { flex: 1; display: grid; grid-template-columns: 200px 1fr; min-height: 0; }
.left { display: flex; flex-direction: column; padding: 6px 1px 0 6px; }
.nrow { display: flex; gap: 4px; height: 16px; }
.nrow input { flex: 1; min-width: 0; background: #616161; padding-left: 3px; }
.swatch { width: 15px; border: 1px solid #333; background: linear-gradient(#000 50%, #fff 50%); }
.mod { margin-top: 8px; height: 15px; }
.mod select { padding: 0 2px; }
.stack { position: relative; margin-top: 4px; height: 85px; border: 1px solid #e4e4ea; background: #404040; box-shadow: inset 0 0 0 1px #888; }
.si { display: flex; align-items: center; height: 14px; padding: 0 4px 0 6px; gap: 6px; position: relative; z-index: 1; }
.si svg { width: 10px; height: 10px; }
.sub { margin-left: 23px; padding-left: 2px; }
.hl { background: #5480c2; color: #d8ec4c; }
.hl svg { color: #fff; }
.stack::after { content: ""; position: absolute; left: 1px; right: 1px; top: 56px; height: 1px; background: #888; }
.stack::before { content: ""; position: absolute; left: 8px; top: 14px; width: 12px; height: 36px; border-left: 1px dotted #222; border-bottom: 1px dotted #222; }
.halo { position: absolute; left: 17px; top: 20px; width: 38px; height: 38px; border-radius: 50%; background: #4238c4; clip-path: inset(8px 0 0 0); }
.cursor { position: absolute; z-index: 2; left: 36px; top: 36px; width: 8px; height: 12px; fill: #fff; stroke: #555; stroke-width: 1; }
.stools { display: flex; align-items: center; height: 27px; }
.stools button { width: 20px; margin-right: 1px; }
.stools svg { width: 15px; height: 15px; margin: auto; }
.stools i { width: 1px; height: 11px; margin: 0 3px; background: #222; }
.rolls { flex: 1; display: flex; margin-top: 8px; border-top: 1px solid #666; padding-top: 2px; }
.rlist { flex: 1; }
.thumb { width: 4px; margin: 4px 0 0 3px; background: #5c5c5c; }
.roll { background: #525252; border: 1px solid #5c5c5c; margin-bottom: 3px; }
.roll:last-child { margin-bottom: 0; }
.roll:not(.open), .rh { display: flex; align-items: center; height: 15px; padding: 0 5px; gap: 5px; }
.roll.open .rh { height: 13px; }
.roll.open { height: 241px; }
.roll b { flex: 1; color: #eee; }
.roll em { font: 7px/8px "DejaVu Sans", sans-serif; color: #888; }
.sub3 { display: flex; width: 60px; margin: 7px 0 0 59px; background: #3c3c3c; border-radius: 3px; }
.sub3 button { width: 20px; height: 18px; border-radius: 3px; }
.sub3 svg { width: 15px; height: 15px; margin: auto; color: #133c44; }
.fs { margin: 0; padding: 0; min-width: 0; border: 1px solid #3b3b3b; border-radius: 2px; }
.fs legend { margin-left: 4px; padding: 0 1px; line-height: 12px; }
.btn { height: 14px; line-height: 12px; background: #5f5f5f; border: 1px solid #686868; border-bottom-color: #474747; border-radius: 2px; text-align: center; color: #ddd; }
.btn:disabled { background: #555; border-color: #5a5a5a; color: #828282; }
.off, .off input { color: #828282; }
.off input[type=checkbox] { opacity: .4; }
label { display: flex; align-items: center; gap: 3px; white-space: nowrap; }
input[type=checkbox], input[type=radio] { appearance: none; flex: none; width: 8px; height: 8px; background: #646464; border: 1px solid #4b4b4b; }
input[type=radio] { border-radius: 50%; }
input[type=radio]:checked { background: #eee; }
.num { position: relative; display: block; width: 60px; height: 13px; background: #5f5f5f; }
.num input { width: 100%; height: 100%; padding-left: 2px; display: block; }
.num::before, .num::after { content: ""; position: absolute; right: 2px; top: 2px; border: 2px solid transparent; border-top: 0; border-bottom: 3px solid #ccc; }
.num::after { top: 8px; border: 2px solid transparent; border-bottom: 0; border-top: 3px solid #ccc; }
.num.off, .thr.off .num { background: #565656; }
.num.off::before, .num.off::after, .thr.off .num::before, .thr.off .num::after { opacity: .5; }
.named { display: flex; gap: 10px; margin: 4px 26px 0 23px; height: 33px; padding: 1px 12px 0 16px; }
.named legend { margin-left: -12px; }
.named .btn { flex: 1; }
.lockfs { margin: 5px 26px 0 23px; padding: 6px 6px 4px; height: 84px; }
.lockfs label { height: 12px; }
.in1 { margin-left: 9px; }
.radios { display: flex; gap: 17px; margin-left: 16px; }
.radios label { gap: 6px; }
.arow { display: flex; align-items: center; height: 17px; }
.n40 { width: 40px; }
.by { width: 64px; margin: 3px 0 0 28px; }
.disp { margin: 1px 26px 0 23px; height: 42px; }
.disp label { height: 12px; padding-left: 4px; }
.in2 { margin-left: 36px; }
.count { text-align: right; margin: 4px 27px 0 0; }

.right { display: flex; background: #525252; min-width: 0; }
.geo { flex: 1; padding: 0 27px 0 24px; }
.vt { display: flex; gap: 6px; height: 16px; border: 1px solid #3b3b3b; border-top: 0; padding: 0 0 4px 6px; }
.vt label { gap: 6px; }
.two { display: grid; grid-template-columns: 1fr 1fr; gap: 5px 9px; padding: 0 2px; align-items: center; }
.t1 { margin-top: 4px; }
.reo { grid-row: 2 / span 2; grid-column: 2; }
.dot { border: 1px dotted #aaa; }
.c1 { grid-column: 1; }
.ref { margin-top: 5px; padding: 3px 0 3px 2px; display: grid; grid-template-columns: 61px 1fr; gap: 2px 9px; height: 53px; }
.ref label { height: 12px; }
.in { margin-left: 7px; height: 13px; }
.thr { margin-top: 5px; height: 46px; }
.thr .in { height: 15px; }
.thr .arow { padding: 0 1px 0 5px; height: 16px; }
.t2 { margin-top: 5px; }
.t2 .num { width: auto; height: 14px; }
.c2 { grid-column: 2; height: 12px; }
.ops { display: flex; justify-content: space-between; align-items: center; padding: 0 12px 0 2px; height: 20px; }
.ops .btn { width: 52px; }
.ops span { display: flex; }
.ops svg { width: 19px; height: 18px; padding: 3px; background: #484848; }
.ops .sel1 { background: #496074; }
.rbar { width: 7px; margin: 0 1px; background: linear-gradient(#3a3a3a 30px, #5e5e5e 30px, #5e5e5e 300px, #3a3a3a 300px); }

.track { display: flex; align-items: center; gap: 1px; padding: 2px 8px; }
.track button { width: 12px; height: 13px; background: #5a5a5a; border-radius: 2px; line-height: 13px; }
.track button.tslide { width: 103px; background: #626262; }
.time { display: grid; grid-template-columns: 45px 1fr 39px; margin-left: 8px; border-top: 1px solid #222; }
.mcurve svg { width: 14px; height: 9px; margin: 0 auto; }
.ruler { position: relative; display: flex; background: #2b2b2b; }
.ruler span { flex: 2 1 0; min-width: 0; padding-top: 9px; text-align: center; line-height: 11px; color: #aaa; background: linear-gradient(90deg, #787878 1px, transparent 1px) 12.5% 0 / 20% 8px repeat-x; }
.ruler span.h0 { flex: 1 1 0; background-size: 40% 8px; background-position: 0 0; }
.ruler span.h1 { flex: 1 1 6px; text-align: right; background-size: 12px 8px; background-position: 5px 0; }
.now { position: absolute; left: -3px; top: 1px; width: 7px; height: 19px; padding-top: 8px; line-height: 11px; font-weight: normal; background: #7c7c14; color: #e8e85a; text-align: center; }

.status { display: flex; align-items: stretch; overflow: hidden; }
.maxs { width: 84px; margin: 3px 0 2px 2px; display: grid; grid-template-rows: 1fr 1fr; background: #fff; border: 1px solid #999; }
.maxs div { background: #d9bfc2; border-bottom: 1px solid #333; }
.maxs input { width: 100%; padding-left: 3px; font: 10px/14px "Liberation Mono", monospace; color: #8a8a8a; }
.msgs { width: 455px; margin-left: 2px; padding: 8px 0 0 3px; border-left: 1px solid #222; display: grid; grid-template-rows: 21px 14px; font-family: Roboto, sans-serif; }
.coords { flex: 1; display: flex; flex-wrap: wrap; align-content: start; align-items: center; gap: 6px 10px; padding-top: 8px; }
.coords > svg { width: 12px; height: 13px; }
.coords label { gap: 3px; }
.coords label input { width: 47px; height: 13px; background: #5a5a5a; color: #8c8c8c; padding-left: 2px; }
.gr { margin-left: 2px; }
.tagrow { display: flex; align-items: center; gap: 4px; width: 100%; padding-left: 252px; }
.tagi { background: #5480c2; width: 17px; height: 15px; padding: 1px 3px; border-radius: 2px; }
.tagi svg { width: 12px; height: 13px; }
.play { width: 94px; padding-top: 4px; }
.play div { display: flex; justify-content: space-between; align-items: center; height: 18px; }
.play svg { width: 15px; height: 15px; }
.play .num { width: 58px; }
.setkey { width: 34px; height: 40px; margin: 1px 4px 0 12px; background: #5f5f5f; border-radius: 2px; }
.setkey svg { width: 34px; height: 34px; margin: auto; }
.keys { display: grid; grid-template: 14px 16px / 38px 96px; gap: 4px; padding-top: 6px; }
.keys .btn { height: 15px; width: 100%; }
.keys .sel { height: 12px; }
.kf { display: flex; gap: 3px; }
.kf svg { flex: none; width: 15px; height: 15px; }
.nav { display: grid; grid-template: 15px 15px / repeat(4, 14px); gap: 4px 5px; padding: 6px 8px 0 11px; width: 91px; }
.nav svg { width: 14px; height: 14px; }
```
